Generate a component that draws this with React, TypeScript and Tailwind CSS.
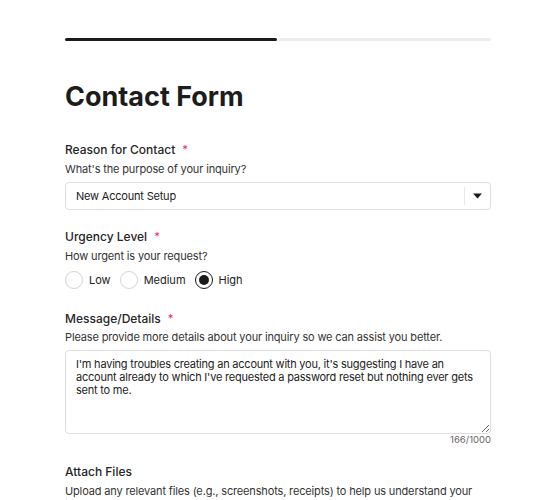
import React from "react";

function Req() {
  return <span className="ml-[7px] text-[11px] text-[#e5316b] relative -top-[1px]">*</span>;
}

function Radio({ label, checked }: { label: string; checked?: boolean }) {
  return (
    <label className="flex items-center gap-[6px]">
      <span
        className={
          "w-[18px] h-[18px] rounded-full border flex items-center justify-center " +
          (checked ? "border-[#1a1a1a] border-[1.5px]" : "border-[#d4d4d8]")
        }
      >
        {checked && <span className="w-[10px] h-[10px] rounded-full bg-[#1a1a1a]" />}
      </span>
      <span className="text-[11px] text-[#222]">{label}</span>
    </label>
  );
}

const labelCls = "text-[12px] font-medium text-[#262626] leading-[16px] flex items-center";
const descCls = "text-[11px] tracking-[-0.15px] text-[#333] leading-[14px]";

export default function App() {
  return (
    <div className="w-[550px] h-[500px] overflow-hidden bg-white" style={{ fontFamily: "Inter, 'Noto Sans', sans-serif" }}>
      <div className="pl-[65px] pt-[38px]">
        <div className="w-[426px]">
          <div className="flex h-[3px] gap-[2px]">
            <div className="w-[212px] bg-[#1c1c1c] rounded-full" />
            <div className="flex-1 bg-[#ececec] rounded-full" />
          </div>
          <h1 className="mt-[40px] text-[27px] font-bold text-[#1c1c1c] leading-[32px]">Contact Form</h1>

          <div className="mt-[29px]">
            <div className={labelCls}>
              Reason for Contact<Req />
            </div>
            <div className={"mt-[4px] " + descCls}>What's the purpose of your inquiry?</div>
            <div className="mt-[6px] h-[28px] border border-[#dedede] rounded-[4px] flex items-center">
              <span className="flex-1 pl-[10px] text-[11px] tracking-[-0.2px] text-[#222]">New Account Setup</span>
              <span className="w-px h-[18px] bg-[#e8e8e8]" />
              <span className="w-[25px] flex justify-center">
                <svg width="9" height="6" viewBox="0 0 9 6"><path d="M0 0.5h9L4.5 5.5z" fill="#1a1a1a" /></svg>
              </span>
            </div>
          </div>

          <div className="mt-[19px]">
            <div className={labelCls}>
              Urgency Level<Req />
            </div>
            <div className={"mt-[4px] " + descCls}>How urgent is your request?</div>
            <div className="mt-[8px] flex items-center gap-[9px]">
              <Radio label="Low" />
              <Radio label="Medium" />
              <Radio label="High" checked />
            </div>
          </div>

          <div className="mt-[22px]">
            <div className={labelCls}>
              Message/Details<Req />
            </div>
            <div className={"mt-[3px] " + descCls}>
              Please provide more details about your inquiry so we can assist you better.
            </div>
            <textarea
              className="mt-[6px] block w-full h-[84px] border border-[#dedede] rounded-[4px] px-[10px] pt-[7px] text-[11px] tracking-[-0.22px] leading-[13px] text-[#222] resize-y outline-none"
              defaultValue="I'm having troubles creating an account with you, it's suggesting I have an account already to which I've requested a password reset but nothing ever gets sent to me."
            />
            <div className="text-right text-[9.5px] text-[#666] leading-[12px]">166/1000</div>
          </div>

          <div className="mt-[18px]">
            <div className={labelCls}>Attach Files</div>
            <div className={"mt-[4px] " + descCls}>
              Upload any relevant files (e.g., screenshots, receipts) to help us understand your issue better.
            </div>
          </div>
        </div>
      </div>
    </div>
  );
}
